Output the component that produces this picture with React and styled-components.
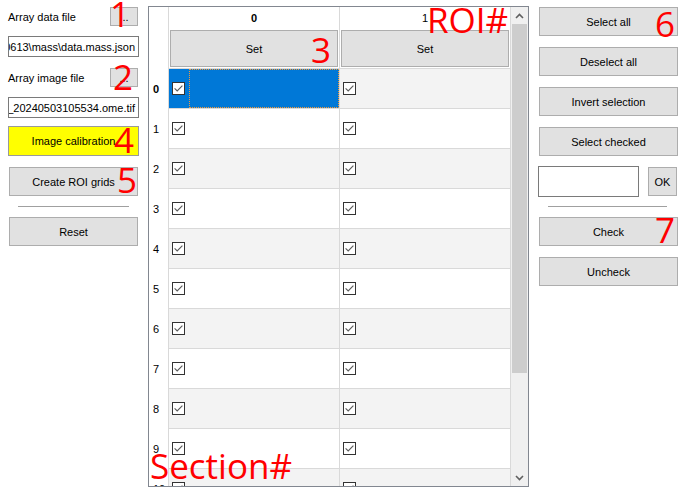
import React from 'react';
import styled, { createGlobalStyle, css } from 'styled-components';

const GlobalStyle = createGlobalStyle`
  html, body {
    margin: 0;
    padding: 0;
    background: #ffffff;
  }
  body {
    font-family: "Liberation Sans", Arial, sans-serif;
    font-size: 11px;
    color: #000;
  }
  * { box-sizing: border-box; }
`;

const Form = styled.div`
  position: relative;
  display: flex;
  align-items: flex-start;
  width: 682px;
  height: 494px;
  overflow: hidden;
  background: #fff;
`;

const SidePanel = styled.div`
  display: flex;
  flex-direction: column;
  flex: none;
  width: ${p => p.$width}px;
  padding-left: ${p => p.$padLeft}px;
  padding-right: ${p => p.$padRight}px;
`;

const FileRow = styled.div`
  display: flex;
  align-items: center;
  justify-content: space-between;
  height: 19px;
  margin-top: ${p => p.$mt}px;
`;

const Label = styled.span`
  white-space: nowrap;
`;

const buttonBase = css`
  display: flex;
  align-items: center;
  justify-content: center;
  padding: 0;
  border: 1px solid #adadad;
  background: #e1e1e1;
  font: inherit;
  color: #000;
  white-space: nowrap;
`;

const BrowseButton = styled.button`
  ${buttonBase}
  width: 28px;
  height: 19px;
  margin-right: 1px;
`;

const Button = styled.button`
  ${buttonBase}
  height: ${p => (p.$highlight ? 30 : 29)}px;
  margin: ${p => p.$mt}px ${p => (p.$highlight ? 0 : 1)}px 0;
  ${p => p.$highlight && css`
    background: #ffff00;
    border-color: #9a9a9a;
  `}
`;

const TextBox = styled.div`
  display: flex;
  align-items: center;
  justify-content: flex-end;
  width: ${p => (p.$width ? `${p.$width}px` : 'auto')};
  height: ${p => p.$height}px;
  margin-top: ${p => p.$mt || 0}px;
  padding: 0 3px;
  border: 1px solid #7a7a7a;
  background: #fff;
  overflow: hidden;
  white-space: nowrap;
`;

const Separator = styled.div`
  height: 1px;
  margin: ${p => p.$mt}px ${p => p.$right}px 0 ${p => p.$left}px;
  background: #a0a0a0;
`;

const InputRow = styled.div`
  display: flex;
  align-items: center;
  justify-content: space-between;
  margin-top: 10px;
`;

const OkButton = styled.button`
  ${buttonBase}
  width: 29px;
  height: 29px;
  margin-right: 2px;
`;

/* ---- grid ---- */

const GridFrame = styled.div`
  display: flex;
  flex: none;
  margin-top: 6px;
  width: 381px;
  height: 481px;
  border: 1px solid #828790;
  background: #fff;
`;

const GridViewport = styled.div`
  flex: 1;
  overflow: hidden;
`;

const GridTable = styled.div`
  display: grid;
  grid-template-columns: 20px 171px 171px;
  grid-template-rows: 22px 40px;
  grid-auto-rows: 40px;
`;

const lineColor = '#d9d9d9';

const HeadCell = styled.div`
  display: flex;
  align-items: center;
  justify-content: ${p => (p.$row ? 'flex-start' : 'center')};
  padding-left: ${p => (p.$row ? 4 : 0)}px;
  border-right: 1px solid ${lineColor};
  font-weight: ${p => (p.$active ? 700 : 400)};
  background: #fff;
`;

const SetCell = styled.div`
  display: flex;
  padding: 1px;
  border-right: 1px solid ${lineColor};
  border-bottom: 1px solid ${lineColor};
`;

const SetButton = styled.button`
  ${buttonBase}
  flex: 1;
`;

const DataCell = styled.div`
  display: flex;
  border-right: 1px solid ${lineColor};
  border-bottom: 1px solid ${lineColor};
  background: ${p => (p.$selected ? '#0078d7' : p.$alt ? '#f3f3f3' : '#fff')};
`;

const CheckSlot = styled.div`
  display: flex;
  align-items: center;
  width: 20px;
  padding-left: 3px;
`;

const ValueSlot = styled.div`
  flex: 1;
  border: 1px dotted ${p => (p.$focused ? '#f39a3a' : 'transparent')};
`;

const Box = styled.svg`
  display: block;
  flex: none;
`;

const CheckBox = () => (
  <Box width="13" height="13" viewBox="0 0 13 13">
    <rect x="0.5" y="0.5" width="12" height="12" fill="#fff" stroke="#333" />
    <polyline points="2.6,6.4 5.2,9 10.4,3.6" fill="none" stroke="#5a5a5a" strokeWidth="1.1" />
  </Box>
);

const ScrollBar = styled.div`
  display: flex;
  flex-direction: column;
  width: 17px;
  background: #f0f0f0;
`;

const ScrollArrow = styled.div`
  display: flex;
  align-items: center;
  justify-content: center;
  height: 17px;
  flex: none;
`;

const ScrollThumb = styled.div`
  height: 349px;
  margin: 0 1px;
  background: #cdcdcd;
`;

const ScrollTrack = styled.div`
  flex: 1;
`;

const Chevron = ({ down }) => (
  <svg width="9" height="6" viewBox="0 0 9 6">
    <polyline
      points={down ? '1,1 4.5,4.5 8,1' : '1,5 4.5,1.5 8,5'}
      fill="none"
      stroke="#606060"
      strokeWidth="1.6"
    />
  </svg>
);

/* ---- red annotations laid over the form ---- */

const Note = styled.span`
  position: absolute;
  left: ${p => p.$x}px;
  top: ${p => p.$y}px;
  font-family: "Open Sans", "DejaVu Sans", sans-serif;
  font-size: 35px;
  line-height: 1;
  color: #ff0000;
  pointer-events: none;
  white-space: nowrap;
`;

const notes = [
  { t: '1', x: 110, y: -4 },
  { t: '2', x: 113, y: 59 },
  { t: '3', x: 311, y: 32 },
  { t: '4', x: 114, y: 122 },
  { t: '5', x: 117, y: 162 },
  { t: '6', x: 655, y: 6 },
  { t: '7', x: 655, y: 212 },
  { t: 'ROI#', x: 427, y: 2 },
  { t: 'Section#', x: 150, y: 448 },
];

const rows = Array.from({ length: 12 }, (_, i) => i);
const columns = [0, 1];

export default function App() {
  return (
    <>
      <GlobalStyle />
      <Form>
        <SidePanel $width={148} $padLeft={8} $padRight={9}>
          <FileRow $mt={7}>
            <Label>Array data file</Label>
            <BrowseButton>...</BrowseButton>
          </FileRow>
          <TextBox $height={21} $mt={10}>D:\data\20240613\mass\data.mass.json</TextBox>
          <FileRow $mt={11}>
            <Label>Array image file</Label>
            <BrowseButton>...</BrowseButton>
          </FileRow>
          <TextBox $height={21} $mt={10}>D:\images\array_20240503105534.ome.tif</TextBox>
          <Button $highlight $mt={8}>Image calibration</Button>
          <Button $mt={11}>Create ROI grids</Button>
          <Separator $mt={10} $left={10} $right={10} />
          <Button $mt={10}>Reset</Button>
        </SidePanel>

        <GridFrame>
          <GridViewport>
            <GridTable>
              <HeadCell $row />
              {columns.map(c => (
                <HeadCell key={`h${c}`} $active={c === 0}>{c}</HeadCell>
              ))}
              <HeadCell $row />
              {columns.map(c => (
                <SetCell key={`s${c}`}>
                  <SetButton>Set</SetButton>
                </SetCell>
              ))}
              {rows.map(r => (
                <React.Fragment key={r}>
                  <HeadCell $row $active={r === 0}>{r}</HeadCell>
                  {columns.map(c => {
                    const selected = r === 0 && c === 0;
                    return (
                      <DataCell key={c} $alt={r % 2 === 0} $selected={selected}>
                        <CheckSlot>
                          <CheckBox />
                        </CheckSlot>
                        <ValueSlot $focused={selected} />
                      </DataCell>
                    );
                  })}
                </React.Fragment>
              ))}
            </GridTable>
          </GridViewport>
          <ScrollBar>
            <ScrollArrow><Chevron /></ScrollArrow>
            <ScrollThumb />
            <ScrollTrack />
            <ScrollArrow><Chevron down /></ScrollArrow>
          </ScrollBar>
        </GridFrame>

        <SidePanel $width={153} $padLeft={9} $padRight={3}>
          <Button $mt={7}>Select all</Button>
          <Button $mt={11}>Deselect all</Button>
          <Button $mt={11}>Invert selection</Button>
          <Button $mt={11}>Select checked</Button>
          <InputRow>
            <TextBox $width={101} $height={31} />
            <OkButton>OK</OkButton>
          </InputRow>
          <Separator $mt={9} $left={10} $right={12} />
          <Button $mt={10}>Check</Button>
          <Button $mt={11}>Uncheck</Button>
        </SidePanel>

        {notes.map(n => (
          <Note key={n.t} $x={n.x} $y={n.y}>{n.t}</Note>
        ))}
      </Form>
    </>
  );
}
